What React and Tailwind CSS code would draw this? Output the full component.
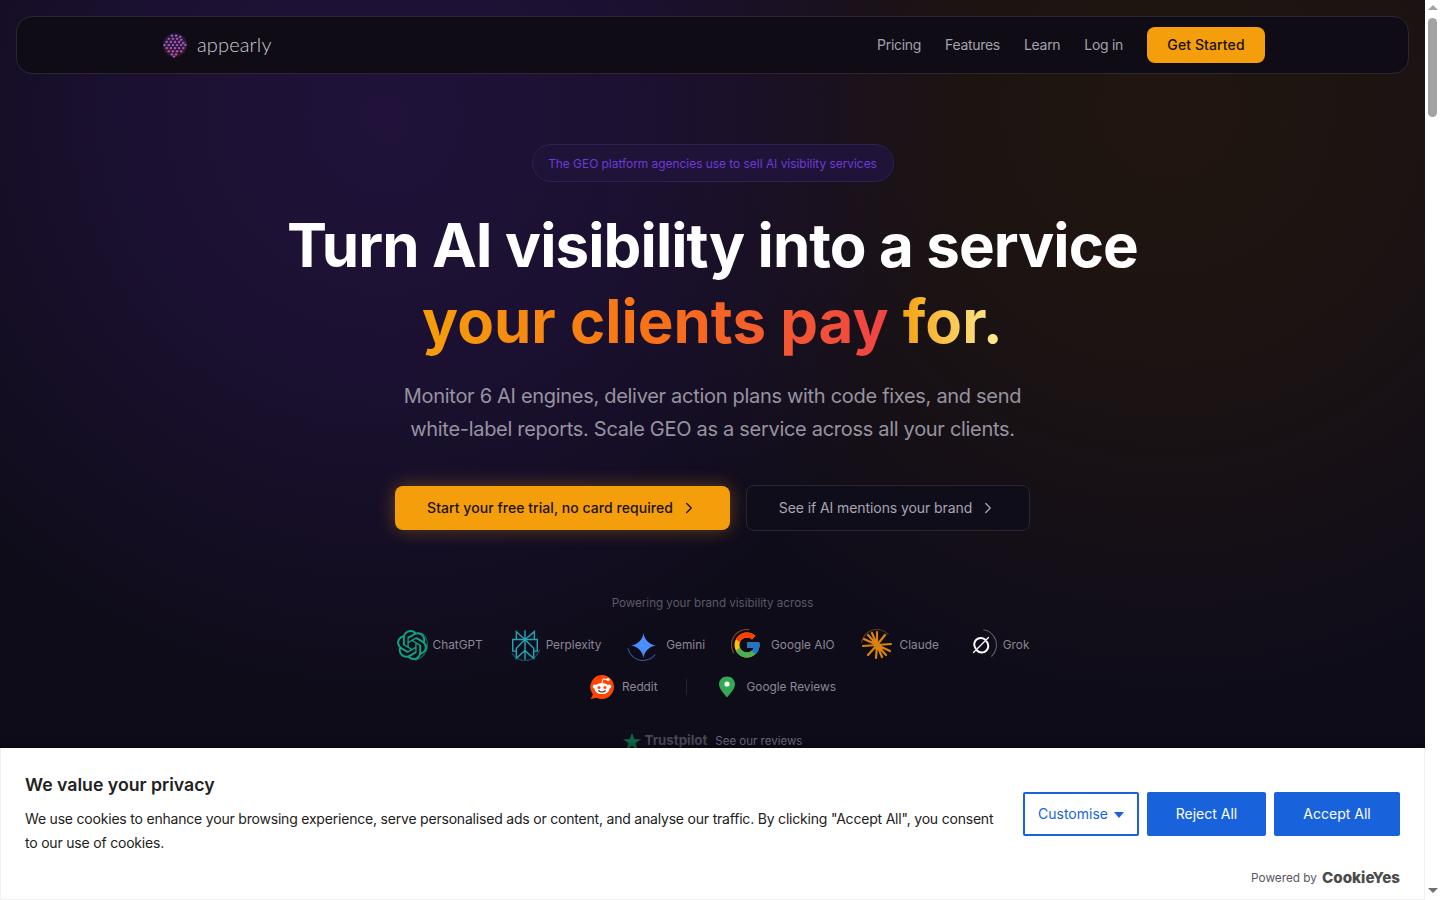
import { ChevronRight } from 'lucide-react'
import { SiOpenai, SiPerplexity } from 'react-icons/si'
import { FcGoogle } from 'react-icons/fc'

const LOGO_DOTS = [
  [-3, -9], [1, -9], [5, -8],
  [-6, -6], [-2, -6], [2, -6], [6, -5],
  [-8, -3], [-4, -3], [0, -3], [4, -3], [8, -2],
  [-10, 0], [-6, 0], [-2, 0], [2, 0], [6, 0], [10, 0],
  [-8, 3], [-4, 3], [0, 3], [4, 3], [8, 3],
  [-6, 6], [-2, 6], [2, 6], [6, 6],
  [-3, 9], [1, 9],
  [-1, 11],
]

const Logo = () => (
  <svg width="26" height="26" viewBox="-12.500 -12.500 25 25">
    <defs>
      <linearGradient id="logoFill" x1="0" y1="0" x2="0.2" y2="1">
        <stop offset="0" stopColor="#3444c0" />
        <stop offset="0.55" stopColor="#a65cc8" />
        <stop offset="1" stopColor="#c8345a" />
      </linearGradient>
    </defs>
    <circle cx="0" cy="0" r="11.500" fill="url(#logoFill)" opacity="0.2" />
    <g fill="url(#logoFill)">
      {LOGO_DOTS.map(([x, y]) => (
        <circle key={`${x}-${y}`} cx={x} cy={y} r="1.250" />
      ))}
    </g>
  </svg>
)

const Ring = ({ color, start = 0 }) => (
  <svg className="absolute inset-0" width="32" height="32" viewBox="0 0 32 32" fill="none">
    <circle
      cx="16"
      cy="16"
      r="15.500"
      stroke={color}
      strokeWidth="1.200"
      strokeDasharray="34 100"
      strokeLinecap="round"
      opacity="0.6"
      transform={`rotate(${start} 16 16)`}
    />
  </svg>
)

const GeminiIcon = () => (
  <svg width="25" height="25" viewBox="0 0 24 24" fill="#4b8dfa">
    <path d="M12 0C13 6.500 17 10.800 24 12 17 13.200 13 17.500 12 24 11 17.500 7 13.200 0 12 7 10.800 11 6.500 12 0z" />
  </svg>
)

const ClaudeIcon = () => (
  <svg width="30" height="30" viewBox="0 0 30 30" stroke="#d9820f" strokeWidth="2.200" strokeLinecap="round">
    <path d="M15 15 15 2M15 15 14 28M15 15 1 16M15 15 29 14M15 15 6 5M15 15 24 25M15 15 23 5M15 15 6 25M15 15 2 9M15 15 28 21M15 15 10 3M15 15 20 27" />
  </svg>
)

const GrokIcon = () => (
  <svg width="20" height="20" viewBox="0 0 20 20" fill="none" stroke="#fff" strokeWidth="2" strokeLinecap="round">
    <path d="M14 4.500A6.500 6.500 0 0 0 4.600 13.400" />
    <path d="M6 15.500A6.500 6.500 0 0 0 15.500 6.500" />
    <path d="M2.500 17.500 17.500 2.500" strokeWidth="1.200" />
  </svg>
)

const RedditIcon = () => (
  <svg width="26" height="26" viewBox="0 0 26 26">
    <path d="M13 1a12 12 0 1 1-5.500 22.700L1.500 25l2.500-4.500A12 12 0 0 1 13 1z" fill="#ff4500" />
    <ellipse cx="13" cy="14.500" rx="7.500" ry="5.500" fill="#fff" />
    <circle cx="5.800" cy="12.500" r="2" fill="#fff" />
    <circle cx="20.200" cy="12.500" r="2" fill="#fff" />
    <circle cx="19" cy="5.500" r="1.600" fill="#fff" />
    <path d="M13 9l1-4 4 .5" stroke="#fff" strokeWidth="1" fill="none" />
    <circle cx="10" cy="13.500" r="1.500" fill="#ff4500" />
    <circle cx="16" cy="13.500" r="1.500" fill="#ff4500" />
    <path d="M9.500 16.500c2 2 5 2 7 0" stroke="#3a1a10" strokeWidth="1.200" fill="none" />
  </svg>
)

const PinIcon = () => (
  <svg width="18" height="22" viewBox="0 0 18 22">
    <path d="M9 .5C4.300.5 1 4 1 8.200 1 13 6 17.500 9 21.500 12 17.500 17 13 17 8.200 17 4 13.700.5 9 .5z" fill="#34a853" />
    <circle cx="9" cy="8" r="2.600" fill="#fff" />
  </svg>
)

const TrustpilotStar = () => (
  <svg width="18" height="18" viewBox="0 0 24 24" fill="#0a6a4c">
    <path d="M12 1l3 8.500h9l-7.300 5.300 2.800 8.700L12 18.200 4.500 23.500l2.800-8.700L0 9.500h9z" />
  </svg>
)

const ENGINES = [
  { name: 'ChatGPT', ring: '#10a37f', start: -50, gap: 'gap-[5px]', icon: <SiOpenai className="text-[30px] text-[#10a37f]" /> },
  { name: 'Perplexity', ring: '#20808d', start: 20, gap: 'gap-[5px]', icon: <SiPerplexity className="text-[30px] text-[#20a5b5]" /> },
  { name: 'Gemini', ring: '#4b7de8', start: 40, gap: 'gap-[7px]', icon: <GeminiIcon /> },
  { name: 'Google AIO', ring: '#b8702a', start: 150, gap: 'gap-[8px]', icon: <FcGoogle className="text-[30px]" /> },
  { name: 'Claude', ring: '#8a5a1c', start: 190, gap: 'gap-[7px]', icon: <ClaudeIcon /> },
  { name: 'Grok', ring: '#8a8a92', start: -80, gap: 'gap-[6px]', icon: <GrokIcon /> },
]

const App = () => {
  return (
    <div className="flex h-screen w-full overflow-hidden bg-white font-['Inter',sans-serif]">
      <div className="relative h-full flex-1 overflow-hidden bg-[#0f0c1a] bg-[radial-gradient(circle_at_27%_13%,#20123a_0%,rgba(32,18,58,0.7)_20%,rgba(15,12,26,0)_44%),radial-gradient(circle_at_82%_12%,#21160f_0%,rgba(33,22,15,0.7)_18%,rgba(15,12,26,0)_42%)]">
        <div className="px-4 pt-4">
          <header className="flex h-[58px] items-center justify-between rounded-2xl border border-[#2a2733] bg-[#0f0c16] pl-[145px] pr-[143px]">
            <div className="flex items-center gap-[9px]">
              <Logo />
              <span className="pb-[2px] font-['Lato',sans-serif] text-[20px] font-light tracking-[0.15px] text-[#cfccd4]">appearly</span>
            </div>
            <nav className="flex items-center gap-6 pb-[1px] text-[14px] tracking-[-0.3px] text-[#a5a1ad]">
              <a>Pricing</a>
              <a>Features</a>
              <a>Learn</a>
              <a>Log in</a>
              <button className="h-9 w-[118px] rounded-lg bg-[#f59e0b] text-[14px] font-medium tracking-[0.1px] text-[#17110a]">Get Started</button>
            </nav>
          </header>
        </div>

        <main className="flex flex-col items-center">
          <div className="mt-[70px] flex h-[38px] w-[362px] items-center justify-center rounded-full border border-[#2f2050] bg-[#1f1338] pt-[2px] text-[11.900px] text-[#7139d8]">
            The GEO platform agencies use to sell AI visibility services
          </div>
          <h1 className="mt-[25px] text-center text-[60px] font-bold leading-[76px] tracking-[-0.9px] text-white">
            Turn AI visibility into a service
            <br />
            <span className="bg-[linear-gradient(90deg,#f59e0b_0%,#f97316_38%,#ef4444_80%,#ef4444_81%,#f59e0b_82%,#fde68a_98%)] bg-clip-text tracking-[0px] text-transparent">your clients pay for.</span>
          </h1>
          <p className="mt-[21px] text-center text-[20px] leading-[33px] tracking-[-0.3px] text-[#9793a0]">
            Monitor 6 AI engines, deliver action plans with code fixes, and send
            <br />
            white-label reports. Scale GEO as a service across all your clients.
          </p>
          <div className="mt-[39px] flex items-center gap-4">
            <button className="flex h-11 w-[335px] items-center justify-center gap-[7px] rounded-lg bg-[#f59e0b] pb-[1px] text-[14px] font-medium tracking-[0.05px] text-[#1a1208] shadow-[0_0_18px_rgba(245,158,11,0.35)]">
              Start your free trial, no card required
              <ChevronRight size={18} strokeWidth={1.75} />
            </button>
            <button className="flex h-[46px] w-[284px] items-center justify-center gap-[7px] rounded-lg border border-[#2a2733] bg-[#100d1b] pb-[1px] text-[14px] tracking-[-0.08px] text-[#a9a5b1]">
              See if AI mentions your brand
              <ChevronRight size={18} strokeWidth={1.75} />
            </button>
          </div>
          <p className="mt-[64px] text-[11.600px] text-[#5c5866]">Powering your brand visibility across</p>
          <div className="mt-[17px] flex items-center gap-[26px]">
            {ENGINES.map((engine) => (
              <div key={engine.name} className={`flex items-center ${engine.gap}`}>
                <div className="relative flex h-8 w-8 items-center justify-center">
                  {engine.icon}
                  <Ring color={engine.ring} start={engine.start} />
                </div>
                <span className="text-[11.800px] text-[#8b8794]">{engine.name}</span>
              </div>
            ))}
          </div>
          <div className="mt-[13px] flex items-center">
            <RedditIcon />
            <span className="ml-[7px] text-[11.800px] text-[#8b8794]">Reddit</span>
            <span className="mx-[28px] h-4 w-px bg-[#26232e]" />
            <span className="ml-[3px]"><PinIcon /></span>
            <span className="ml-[11px] text-[11.800px] text-[#8b8794]">Google Reviews</span>
          </div>
          <div className="mt-[31px] flex items-center">
            <TrustpilotStar />
            <span className="ml-1 text-[13.300px] font-bold text-[#4a4853]">Trustpilot</span>
            <span className="ml-2 text-[11.500px] text-[#6d6976]">See our reviews</span>
          </div>
        </main>

        <section className="absolute inset-x-0 bottom-0 h-[152px] border-x border-b border-[#f0f0f0] bg-white pl-6 pr-6 pt-[25px] shadow-[0_-2px_8px_rgba(0,0,0,0.4)]">
          <div className="flex gap-[26px]">
            <div className="w-[972px] shrink-0">
              <h2 className="text-[17.700px] font-semibold leading-6 text-[#212121]">We value your privacy</h2>
              <p className="mt-[10px] text-[14px] leading-6 tracking-[-0.2px] text-[#212121]">
                We use cookies to enhance your browsing experience, serve personalised ads or content, and analyse our traffic. By clicking "Accept All", you consent to our use of cookies.
              </p>
            </div>
            <div className="mt-[19px] flex shrink-0 flex-col items-end">
              <div className="flex gap-2">
                <button className="flex h-11 w-[116px] items-center justify-center gap-[6px] rounded-[2px] border-2 border-[#1863dc] pb-[1px] text-[14px] text-[#1863dc]">
                  Customise
                  <span className="mt-[2px] h-0 w-0 border-x-[5px] border-t-[6px] border-x-transparent border-t-[#1863dc]" />
                </button>
                <button className="h-11 w-[119px] rounded-[2px] bg-[#1863dc] pb-[1px] text-[14px] text-white">Reject All</button>
                <button className="h-11 w-[126px] rounded-[2px] bg-[#1863dc] pb-[1px] text-[14px] text-white">Accept All</button>
              </div>
              <div className="mt-[31px] flex items-center gap-[5px] text-[#565662]">
                <span className="text-[11.800px]">Powered by</span>
                <span className="text-[15.200px] font-extrabold text-[#4b4b4b]">CookieYes</span>
              </div>
            </div>
          </div>
        </section>
      </div>

      <aside className="flex h-full w-[15px] shrink-0 flex-col items-center bg-white">
        <span className="mt-[5px] h-0 w-0 border-x-[5px] border-b-[5px] border-x-transparent border-b-[#a3a3a3]" />
        <span className="mt-[8px] h-[99px] w-[9px] rounded-full bg-[#a3a3a3]" />
        <span className="mb-[7px] mt-auto h-0 w-0 border-x-[5px] border-t-[5px] border-x-transparent border-t-[#707070]" />
      </aside>
    </div>
  )
}

export default App
